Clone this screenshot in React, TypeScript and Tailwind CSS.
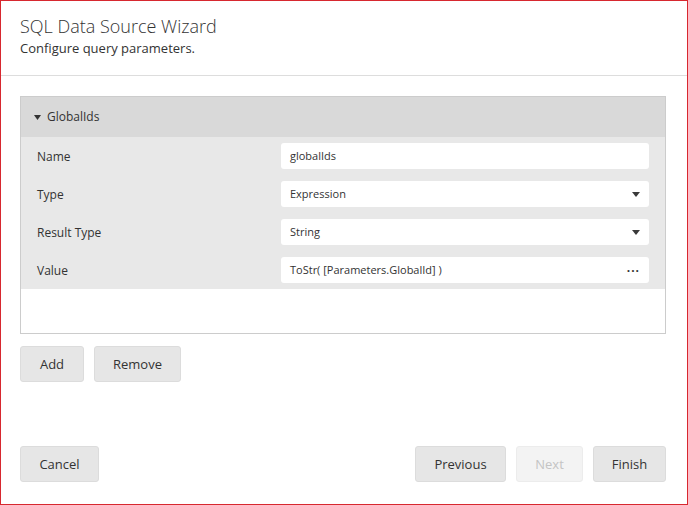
import React from "react";

const font = { fontFamily: '"Open Sans", "Noto Sans", Arial, sans-serif' };

function Caret() {
  return (
    <svg width="8" height="5" viewBox="0 0 8 5" className="shrink-0">
      <path d="M0 0 L8 0 L4 5 Z" fill="#3a3a3a" />
    </svg>
  );
}

function Row({ label, children }: { label: string; children: React.ReactNode }) {
  return (
    <div className="flex items-center h-[38px] pl-4 pr-4">
      <div className="w-[244px] text-[12px] text-[#333] pt-[2px]">{label}</div>
      <div className="flex-1">{children}</div>
    </div>
  );
}

function Field({ value, icon }: { value: string; icon?: "caret" | "dots" }) {
  return (
    <div className="h-[26px] bg-white rounded-[3px] flex items-center pl-[9px] pr-[9px] text-[11px] text-[#333]">
      <span className="flex-1 pt-[1px]">{value}</span>
      {icon === "caret" && <Caret />}
      {icon === "dots" && (
        <span className="text-[12px] font-bold leading-none tracking-[1px] text-[#333] -mt-[4px]">...</span>
      )}
    </div>
  );
}

function Btn({ children, w, disabled }: { children: React.ReactNode; w: string; disabled?: boolean }) {
  return (
    <div
      className={`${w} h-9 rounded-[3px] border flex items-center justify-center text-[13px] pt-[1px] ${
        disabled
          ? "bg-[#f3f3f3] border-[#ececec] text-[#c4c4c4]"
          : "bg-[#e6e6e6] border-[#dcdcdc] text-[#333]"
      }`}
    >
      {children}
    </div>
  );
}

export default function App() {
  return (
    <div style={font} className="w-[688px] h-[505px] bg-white border border-[#d7282f] flex flex-col">
      <div className="h-[75px] border-b border-[#dddddd] pl-[19px] pr-[21px] pt-[13px]">
        <div className="text-[18px] font-light text-[#333] leading-[24px]">SQL Data Source Wizard</div>
        <div className="text-[13px] text-[#333] leading-[18px] mt-[1px]">Configure query parameters.</div>
      </div>
      <div className="pl-[19px] pr-[21px] pt-5">
        <div className="h-[238px] border border-[#cccccc] bg-white">
          <div className="h-10 bg-[#d9d9d9] flex items-center pl-[13px] gap-[6px] text-[12px] text-[#333]">
            <svg width="7" height="5" viewBox="0 0 7 5">
              <path d="M0 0 L7 0 L3.5 5 Z" fill="#333" />
            </svg>
            <span>GlobalIds</span>
          </div>
          <div className="bg-[#e8e8e8]">
            <Row label="Name">
              <Field value="globalIds" />
            </Row>
            <Row label="Type">
              <Field value="Expression" icon="caret" />
            </Row>
            <Row label="Result Type">
              <Field value="String" icon="caret" />
            </Row>
            <Row label="Value">
              <Field value="ToStr( [Parameters.GlobalId] )" icon="dots" />
            </Row>
          </div>
        </div>
        <div className="flex gap-[10px] mt-3">
          <Btn w="w-[64px]">Add</Btn>
          <Btn w="w-[87px]">Remove</Btn>
        </div>
      </div>
      <div className="flex-1" />
      <div className="pl-[19px] pr-[21px] pb-[22px] flex items-center">
        <Btn w="w-[79px]">Cancel</Btn>
        <div className="flex-1" />
        <div className="flex gap-[10px]">
          <Btn w="w-[91px]">Previous</Btn>
          <Btn w="w-[67px]" disabled>
            Next
          </Btn>
          <Btn w="w-[73px]">Finish</Btn>
        </div>
      </div>
    </div>
  );
}
